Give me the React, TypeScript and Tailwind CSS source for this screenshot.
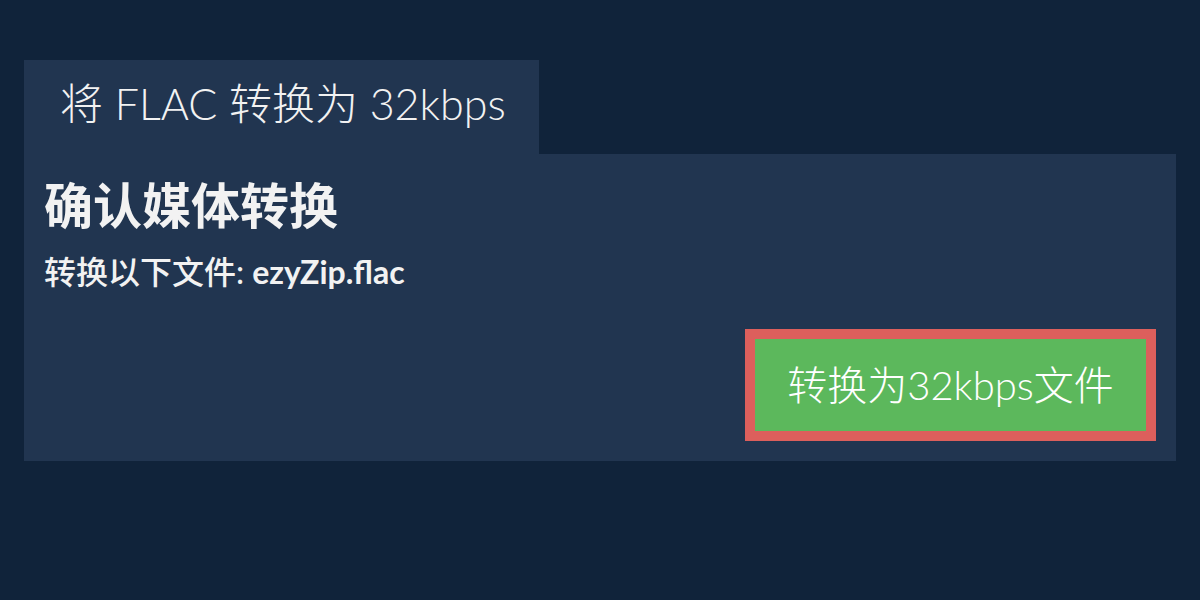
import React from 'react';

const App: React.FC = () => {
  return (
    <div className="min-h-[600px] w-[1200px] bg-[#10233a] pt-[60px] px-[24px] font-['Lato','Noto_Sans_CJK_SC',sans-serif] text-[#f2f2f2]">
      <div className="flex h-[94px] w-[515px] items-center bg-[#213550] pb-[8px] pl-[36px]">
        <h1 className="whitespace-nowrap text-[43px] font-light leading-none">将 FLAC 转换为 32kbps</h1>
      </div>
      <div className="h-[307px] bg-[#213550] px-[20px] pt-[23px]">
        <h2 className="text-[49px] font-bold leading-[56px]">确认媒体转换</h2>
        <p className="mt-[19px] text-[32px] font-medium leading-[40px]">
          转换以下文件: <span className="font-bold">ezyZip.flac</span>
        </p>
        <div className="mt-[37px] flex justify-end">
          <button className="flex h-[112px] w-[411px] items-center justify-center border-[10px] border-[#dc5f5c] bg-[#5cb85c] text-[40px] font-light text-white">
            转换为32kbps文件
          </button>
        </div>
      </div>
    </div>
  );
};

export default App;
